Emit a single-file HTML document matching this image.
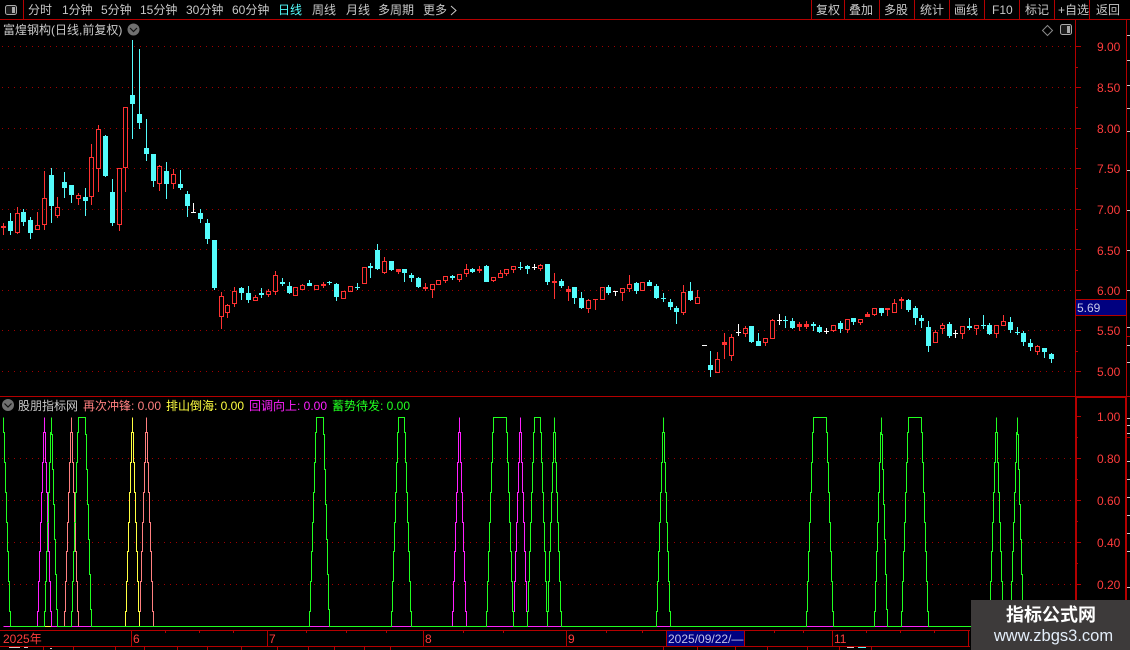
<!DOCTYPE html>
<html><head><meta charset="utf-8"><style>
html,body{margin:0;padding:0;background:#000;width:1130px;height:650px;overflow:hidden}
svg{position:absolute;left:0;top:0}
text{font-family:"Liberation Sans","WenQuanYi Zen Hei","Noto Sans CJK SC",sans-serif;font-size:12px}
.m{fill:#c8c8c8}.a{fill:#ff3c3c}
</style></head><body>
<svg id="s" xmlns="http://www.w3.org/2000/svg" width="1130" height="650" viewBox="0 0 1130 650">
<defs><pattern id="dot" x="2" y="0" width="6" height="1" patternUnits="userSpaceOnUse"><rect width="1" height="1" fill="#a00000"/></pattern></defs>
<rect width="1130" height="650" fill="#000"/>
<g fill="url(#dot)" shape-rendering="crispEdges">
<rect y="46" width="1075" height="1"/><rect y="87" width="1075" height="1"/><rect y="128" width="1075" height="1"/><rect y="168" width="1075" height="1"/><rect y="209" width="1075" height="1"/><rect y="249" width="1075" height="1"/><rect y="290" width="1075" height="1"/><rect y="330" width="1075" height="1"/><rect y="371" width="1075" height="1"/><rect y="458" width="1075" height="1"/><rect y="500" width="1075" height="1"/><rect y="542" width="1075" height="1"/><rect y="584" width="1075" height="1"/>
</g>
<g id="c" shape-rendering="crispEdges"></g>
<g id="l" fill="none" stroke-width="1" shape-rendering="crispEdges"></g>
<g fill="#b40000" shape-rendering="crispEdges">
<rect x="1075" y="396" width="52" height="2"/><rect x="1075" y="398" width="2" height="202"/><rect x="1125" y="398" width="2" height="202"/>
</g>
<g stroke="#b40000" fill="none" shape-rendering="crispEdges">
<path d="M0 19.5H1130M23.5 0V19M811.5 0V19M844.5 0V19M879.5 0V19M914.5 0V19M949.5 0V19M984.5 0V19M1019.5 0V19M1054.5 0V19M1089.5 0V19"/>
<path d="M1075.5 19V396M1126.5 19V396M0 396.5H1130"/>
<path d="M1075 46.5H1081M1075 87.5H1081M1075 128.5H1081M1075 168.5H1081M1075 209.5H1081M1075 249.5H1081M1075 290.5H1081M1075 330.5H1081M1075 371.5H1081M1075 67.5H1078M1075 107.5H1078M1075 148.5H1078M1075 188.5H1078M1075 229.5H1078M1075 270.5H1078M1075 351.5H1078"/>
<path d="M1075 416.5H1081M1075 458.5H1081M1075 500.5H1081M1075 542.5H1081M1075 584.5H1081M1075 437.5H1078M1075 479.5H1078M1075 521.5H1078M1075 563.5H1078"/>
<path d="M1127 19.5H1130M1127 336.5H1130M1127 437.5H1130"/>
<path d="M0 630.5H970M0 646.5H970M131.5 630V646M267.5 630V646M423.5 630V646M566.5 630V646M832.5 630V646M968.5 630V646"/>
<path d="M165.5 630V633M199.5 630V633M233.5 630V633M306.5 630V633M346.5 630V633M386.5 630V633M463.5 630V633M503.5 630V633M606.5 630V633M642.5 630V633M774.5 630V633M803.5 630V633M866.5 630V633M900.5 630V633M934.5 630V633"/>
<path d="M43.5 646V650M73.5 646V650M115.5 646V650M144.5 646V650M177.5 646V650M207.5 646V650M241.5 646V650M277.5 646V650M308.5 646V650M334.5 646V650M364.5 646V650M390.5 646V650M663.5 646V650M697.5 646V650M735.5 646V650M767.5 646V650M807.5 646V650M839.5 646V650M871.5 646V650"/>
</g>
<g stroke="#ccc" fill="none" shape-rendering="crispEdges">
<path d="M1127 35.5H1130M1127 60.5H1130M1127 85.5H1130M1127 108.5H1130M1127 131.5H1130M1127 170.5H1130M1127 210.5H1130M1127 250.5H1130M1127 290.5H1130M1127 327.5H1130M1127 345.5H1130M1127 362.5H1130M1127 418.5H1130M1127 425.5H1130M1127 433.5H1130M1127 461.5H1130M1127 479.5H1130M1127 497.5H1130M1127 515.5H1130M1127 533.5H1130M1127 551.5H1130M1127 587.5H1130"/>
<path d="M9 647.5H20M24 647.5H28M50 648.5H52M847 647.5H854"/>
</g>
<path d="M858 647.5H866" stroke="#54fcfc" fill="none"/>
<!-- top icons -->
<rect x="5.5" y="5.5" width="11" height="9" rx="2" fill="#1c1c1c" stroke="#aaa"/><rect x="12" y="7" width="3" height="6" fill="#aaa"/>
<rect x="1060.5" y="24.5" width="11" height="10" rx="2" fill="#1c1c1c" stroke="#aaa"/><rect x="1067" y="26" width="3" height="7" fill="#aaa"/>
<path d="M1047.5 25.5L1052.5 30.5L1047.5 35.5L1042.5 30.5Z" fill="none" stroke="#8a8a8a"/>
<circle cx="133.5" cy="29.5" r="6" fill="#707070"/><path d="M130 28L133.5 31.5L137 28" fill="none" stroke="#111" stroke-width="1.2"/>
<circle cx="8" cy="405" r="6" fill="#707070"/><path d="M4.5 403.5L8 407L11.5 403.5" fill="none" stroke="#111" stroke-width="1.2"/>
<!-- top bar text -->
<g class="m">
<text x="28" y="14">分时</text><text x="62" y="14">1分钟</text><text x="101" y="14">5分钟</text><text x="140" y="14">15分钟</text><text x="186" y="14">30分钟</text><text x="232" y="14">60分钟</text>
<text x="278" y="14" style="fill:#54fcfc">日线</text>
<text x="312" y="14">周线</text><text x="346" y="14">月线</text><text x="378" y="14">多周期</text><text x="423" y="14">更多</text>
<text x="816" y="14">复权</text><text x="849" y="14">叠加</text><text x="884" y="14">多股</text><text x="920" y="14">统计</text><text x="954" y="14">画线</text><text x="992" y="14">F10</text><text x="1025" y="14">标记</text><text x="1058" y="14">+自选</text><text x="1096" y="14">返回</text>
<text x="3" y="34">富煌钢构(日线,前复权)</text>
<text x="18" y="410">股朋指标网</text>
</g>
<path d="M451 6L456 10.5L451 15" fill="none" stroke="#c8c8c8"/>
<text x="83" y="410" fill="#ff8080">再次冲锋: 0.00</text>
<text x="166" y="410" fill="#ffff40">排山倒海: 0.00</text>
<text x="249" y="410" fill="#ff20ff">回调向上: 0.00</text>
<text x="332" y="410" fill="#20ff20">蓄势待发: 0.00</text>
<!-- axis labels -->
<g class="a">
<text x="1097" y="51">9.00</text><text x="1097" y="92">8.50</text><text x="1097" y="133">8.00</text><text x="1097" y="173">7.50</text><text x="1097" y="214">7.00</text><text x="1097" y="255">6.50</text><text x="1097" y="295">6.00</text><text x="1097" y="335">5.50</text><text x="1097" y="376">5.00</text>
<text x="1097" y="421">1.00</text><text x="1097" y="463">0.80</text><text x="1097" y="505">0.60</text><text x="1097" y="547">0.40</text><text x="1097" y="589">0.20</text>
<text x="3" y="643">2025年</text><text x="133" y="643">6</text><text x="269" y="643">7</text><text x="425" y="643">8</text><text x="568" y="643">9</text><text x="834" y="643">11</text>
</g>
<rect x="1075.5" y="299.5" width="51" height="16" fill="#000080" stroke="#b40000" shape-rendering="crispEdges"/>
<text x="1077" y="312" fill="#c8c8e8">5.69</text>
<rect x="666.5" y="630.5" width="78" height="16" fill="#000080" stroke="#b40000" shape-rendering="crispEdges"/>
<text x="668" y="643" fill="#c0c0e8">2025/09/22/—</text>
<!-- watermark -->
<rect x="971" y="600" width="159" height="50" fill="#3d3a3a"/>
<text x="1051" y="621" text-anchor="middle" fill="#fff" style="font-size:18px;font-weight:bold;font-family:'Liberation Sans','Noto Sans CJK SC',sans-serif">指标公式网</text>
<text x="1053.5" y="641" text-anchor="middle" fill="#e4eefa" style="font-size:16.5px">www.zbgs3.com</text>
</svg>
<script>
var D=[[3,223,226,228,235,'c2'],[10,213,221,231,235,'c'],[17,207,213,233,234,'r'],[23,209,212,222,226,'c'],[30,217,220,233,239,'c'],[37,212,225,230,230,'r'],[44,171,198,225,230,'r'],[51,168,175,206,223,'c'],[57,197,207,216,218,'r'],[64,172,182,188,198,'c'],[71,185,185,195,203,'c'],[78,193,195,199,205,'r'],[85,188,197,201,216,'c'],[91,144,157,197,205,'r'],[98,125,129,169,192,'r'],[105,135,136,176,177,'c'],[112,179,192,223,226,'c'],[119,168,168,225,231,'r'],[125,107,107,168,192,'r'],[132,40,95,104,139,'c'],[139,49,114,123,129,'c'],[146,119,148,154,161,'c'],[153,154,154,181,187,'c'],[159,165,166,184,191,'r'],[166,162,171,184,199,'c'],[173,169,174,184,189,'r'],[180,170,184,188,190,'c'],[187,191,194,206,217,'c'],[193,203,212,213,213,'w'],[200,209,213,219,223,'c'],[207,219,223,239,244,'c'],[214,240,240,288,290,'c'],[221,292,296,317,329,'r'],[227,304,305,313,318,'r'],[234,287,291,304,307,'r'],[241,287,288,293,300,'c'],[248,286,293,300,303,'c'],[255,295,297,301,301,'r'],[261,288,293,295,298,'c'],[268,289,291,295,297,'r'],[275,271,275,292,295,'r'],[282,278,282,284,286,'c'],[289,282,286,293,294,'c'],[295,287,287,296,296,'r'],[302,284,285,290,290,'r'],[309,280,283,286,286,'c'],[316,285,285,290,290,'r'],[323,282,284,286,288,'r2'],[329,281,282,283,285,'c'],[336,283,284,297,301,'c'],[343,291,291,299,299,'r'],[350,286,286,292,292,'r'],[357,283,287,288,290,'c'],[364,267,267,284,284,'r'],[370,263,266,268,278,'c'],[377,244,250,269,270,'c'],[384,257,261,273,274,'r'],[391,261,261,270,271,'c'],[398,269,269,272,274,'r'],[404,269,269,273,282,'c'],[411,273,275,278,282,'c'],[418,277,278,287,288,'c'],[425,283,287,289,291,'r2'],[432,284,284,290,298,'r'],[438,280,280,285,285,'r'],[445,276,276,281,283,'r'],[452,275,276,278,280,'c'],[459,274,274,280,282,'r'],[466,264,269,274,277,'r'],[472,268,269,272,273,'c'],[479,266,269,271,273,'r2'],[486,265,266,282,282,'c'],[493,277,277,281,282,'r'],[500,270,273,278,278,'r'],[506,269,269,274,276,'r'],[513,266,266,270,273,'r'],[520,262,267,268,270,'c'],[527,265,266,269,274,'c'],[534,264,267,268,270,'w'],[540,264,265,269,271,'r'],[547,264,264,282,285,'c'],[554,273,281,283,299,'r2'],[561,279,281,286,288,'c'],[568,286,289,292,301,'r'],[574,287,287,298,304,'c'],[581,292,298,308,309,'c'],[588,299,300,309,313,'r'],[595,299,299,300,310,'r2'],[602,287,287,300,300,'r'],[608,285,287,293,295,'c'],[615,291,291,292,296,'w'],[622,288,288,293,301,'r'],[629,275,284,289,292,'r'],[636,282,283,291,294,'c'],[642,282,282,291,291,'r'],[649,280,282,286,286,'c'],[656,284,286,298,299,'c'],[663,293,298,299,302,'c'],[670,299,302,307,310,'c'],[676,306,308,312,324,'c'],[683,285,292,313,315,'r'],[690,282,291,300,301,'c'],[697,290,297,304,304,'r'],[704,345,345,346,346,'w'],[710,351,365,370,377,'c'],[717,352,359,373,373,'r'],[724,333,342,345,359,'r'],[731,334,337,356,361,'r'],[738,324,332,333,336,'w'],[745,326,328,334,337,'r'],[751,326,326,342,343,'c'],[758,333,341,346,346,'c'],[765,338,338,343,346,'r'],[772,319,320,339,339,'r'],[779,314,320,321,325,'w'],[785,316,320,321,328,'c'],[792,318,321,328,329,'c'],[799,322,324,327,331,'r'],[806,321,324,327,329,'r'],[813,322,324,326,331,'c'],[819,325,327,332,333,'c'],[826,328,331,332,334,'w'],[833,325,325,331,332,'r'],[840,321,323,329,333,'c'],[847,319,319,330,333,'r'],[853,318,318,322,325,'c'],[860,319,319,323,325,'r'],[867,312,314,317,317,'r'],[874,308,308,315,316,'r'],[881,308,308,313,316,'c'],[887,308,308,310,316,'r2'],[894,299,303,313,313,'r'],[901,297,299,301,309,'r2'],[908,299,300,310,312,'c'],[915,306,308,318,325,'c'],[921,315,318,321,328,'c'],[928,321,327,346,352,'c'],[935,330,332,343,343,'r'],[942,323,325,329,334,'r'],[949,322,324,336,338,'c'],[955,330,333,334,338,'w'],[962,326,326,334,339,'r'],[969,318,326,328,330,'c'],[976,325,325,329,335,'r'],[983,315,325,326,329,'c'],[989,323,325,334,335,'c'],[996,325,325,334,338,'r'],[1003,315,321,326,326,'r'],[1010,317,322,330,333,'c'],[1017,327,332,333,335,'c'],[1023,331,333,342,346,'c'],[1030,339,343,347,351,'c'],[1037,345,346,352,355,'r'],[1044,348,348,352,358,'c'],[1051,353,354,359,363,'c']];
var C={c:'#54fcfc',r:'#ff3232',w:'#ffffff'},h='';
function R(x,y,w,h2,f){return '<rect x="'+x+'" y="'+y+'" width="'+w+'" height="'+h2+'" fill="'+f+'"/>'}
D.forEach(function(d,i){var x=d[0],t=d[5],k=t.charAt(0),col=C[k];
 if(i==0)col=C.r;
 if(k=='r'&&d[3]-d[2]>3){h+=R(x,d[1],1,d[2]-d[1],col)+R(x,d[3],1,d[4]-d[3],col);
  h+='<rect x="'+(x-1.5)+'" y="'+(d[2]+.5)+'" width="4" height="'+(d[3]-d[2]-1)+'" fill="none" stroke="'+col+'"/>';}
 else {h+=R(x,d[1],1,d[4]-d[1],col);h+=R(x-2,d[2],5,Math.max(1,d[3]-d[2]),col);}
});
document.getElementById('c').innerHTML=h;
var X=D.map(function(d){return d[0]});
var S=[['#ff8080',[71,146]],['#ffff40',[132]],['#ff20ff',[44,459,520]],['#20ff20',[3,51,78,85,316,323,398,404,493,500,506,534,540,554,663,813,819,826,881,908,915,921,996,1017]]];
var g='';
S.forEach(function(s){var d='',px=null,py=null;
 X.forEach(function(x){var y=s[1].indexOf(x)>=0?417:626;
  if(px===null){d='M'+(x+.5)+' '+(y+.5);}
  else if(y==py){d+='H'+(x+.5);}
  else{var n=x-px,st=(y-py)/n;
   for(var k=0;k<n;k++){var m=Math.round(py+(k+.5)*st);d+='V'+(m+.5)+'H'+(px+k+1.5);}
   d+='V'+(y+.5);}
  px=x;py=y;});
 g+='<path d="'+d+'" stroke="'+s[0]+'"/>';});
document.getElementById('l').innerHTML=g;
</script>
</body></html>
